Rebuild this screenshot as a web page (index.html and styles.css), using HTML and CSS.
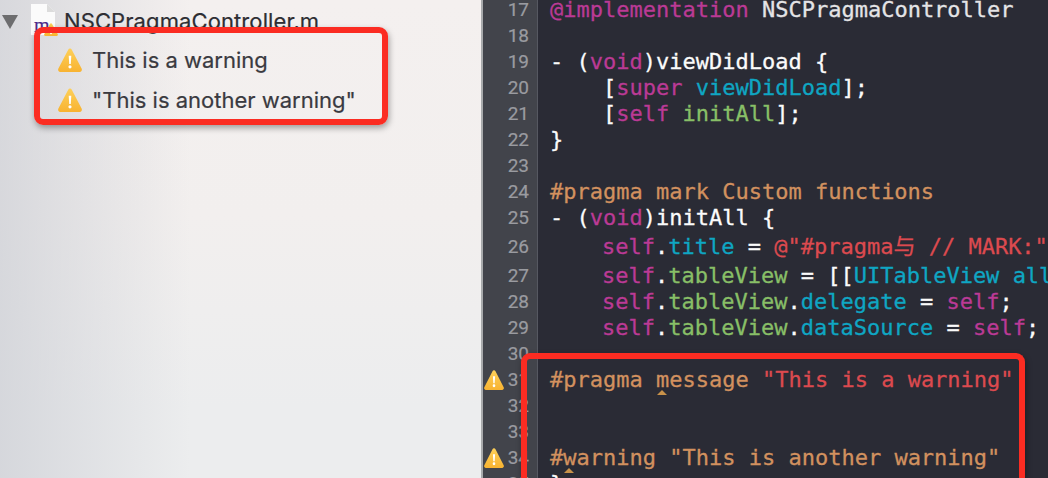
FILE: index.html
```html
<!DOCTYPE html>
<html lang="en">
<head>
<meta charset="utf-8">
<title>NSCPragmaController.m</title>
<link rel="stylesheet" href="styles.css">
</head>
<body>
<svg class="defs" width="0" height="0" aria-hidden="true">
  <defs>
    <linearGradient id="warnfill" x1="0" y1="0" x2="0" y2="1">
      <stop offset="0" stop-color="#fdd05a"/>
      <stop offset="1" stop-color="#f8b331"/>
    </linearGradient>
    <symbol id="warn" viewBox="0 0 24 22" preserveAspectRatio="none">
      <path d="M12 .4c.8 0 1.400.4 1.800 1.100l9.800 17.400c.8 1.400-.2 3-1.800 3H2.200C.6 21.900-.4 20.300.4 18.900L10.200 1.500C10.600.8 11.200.4 12 .4z" fill="url(#warnfill)"/>
      <path d="M10.700 7h2.600l-.5 7.600h-1.600zM12 15.700a1.600 1.600 0 1 1 0 3.200 1.600 1.600 0 0 1 0-3.200z" fill="#fff"/>
    </symbol>
  </defs>
</svg>
<div class="window">
  <aside class="navigator">
    <div class="file-row">
      <svg class="disclosure" viewBox="0 0 16 14"><path d="M0 0h16L8 14z"/></svg>
      <span class="file-icon">
        <svg viewBox="0 0 25 31"><path d="M1 0h16l8 8v23H1z" fill="#fbfbfb"/><path d="M17 0l8 8h-8z" fill="#dcdcdc"/></svg>
        <span class="file-letter">m</span>
        <svg class="file-badge"><use href="#warn"/></svg>
      </span>
      <span class="file-name">NSCPragmaController.m</span>
    </div>
    <div class="issue-row"><svg class="issue-icon"><use href="#warn"/></svg><span>This is a warning</span></div>
    <div class="issue-row"><svg class="issue-icon"><use href="#warn"/></svg><span>"This is another warning"</span></div>
  </aside>
  <main class="editor">
    <div class="line"><span class="num">17</span><code class="src"><i class="kw">@implementation</i> <i class="plain">NSCPragmaController</i></code></div>
    <div class="line"><span class="num">18</span><code class="src"></code></div>
    <div class="line"><span class="num">19</span><code class="src">- (<i class="kw">void</i>)viewDidLoad {</code></div>
    <div class="line"><span class="num">20</span><code class="src">    [<i class="kw">super</i> <i class="api">viewDidLoad</i>];</code></div>
    <div class="line"><span class="num">21</span><code class="src">    [<i class="kw">self</i> <i class="prj">initAll</i>];</code></div>
    <div class="line"><span class="num">22</span><code class="src">}</code></div>
    <div class="line"><span class="num">23</span><code class="src"></code></div>
    <div class="line"><span class="num">24</span><code class="src"><i class="pre">#pragma mark Custom functions</i></code></div>
    <div class="line tall"><span class="num">25</span><code class="src">- (<i class="kw">void</i>)initAll {</code></div>
    <div class="line tall"><span class="num">26</span><code class="src inset">    <i class="kw">self</i>.<i class="api">title</i> = <i class="str">@"#pragma与 // MARK:"</i></code></div>
    <div class="line"><span class="num">27</span><code class="src inset">    <i class="kw">self</i>.<i class="prj">tableView</i> = [[<i class="api">UITableView</i> <i class="api">all</i></code></div>
    <div class="line"><span class="num">28</span><code class="src inset">    <i class="kw">self</i>.<i class="prj">tableView</i>.<i class="api">delegate</i> = <i class="kw">self</i>;</code></div>
    <div class="line"><span class="num">29</span><code class="src inset">    <i class="kw">self</i>.<i class="prj">tableView</i>.<i class="api">dataSource</i> = <i class="kw">self</i>;</code></div>
    <div class="line"><span class="num">30</span><code class="src"></code></div>
    <div class="line"><svg class="gutter-warn"><use href="#warn"/></svg><span class="num">31</span><code class="src"><i class="pre">#pragma <b class="mark">m</b>essage </i><i class="str">"This is a warning"</i></code></div>
    <div class="line"><span class="num">32</span><code class="src"></code></div>
    <div class="line"><span class="num">33</span><code class="src"></code></div>
    <div class="line"><svg class="gutter-warn"><use href="#warn"/></svg><span class="num">34</span><code class="src"><i class="pre">#<b class="mark">w</b>arning "This is another warning"</i></code></div>
    <div class="line"><span class="num">35</span><code class="src">}</code></div>
  </main>
</div>
<div class="callout callout-nav"></div>
<div class="callout callout-code"></div>
</body>
</html>
```
FILE: styles.css
```css
* { box-sizing: border-box; }
html, body { margin: 0; height: 100%; overflow: hidden; }
body { position: relative; background: #2a2b35; }
.defs { position: absolute; }

.window { display: flex; height: 478px; overflow: hidden; }

.navigator {
  flex: 0 0 481px;
  padding-top: 5px;
  background:
    linear-gradient(90deg, rgba(206, 208, 214, .75) 0, rgba(206, 208, 214, 0) 190px),
    linear-gradient(180deg, #f4f0ef 0, #f2efee 45%, #ecedee 85%);
  font-family: "Inter", "Liberation Sans", sans-serif;
  color: #3a3a40;
  -webkit-text-stroke: .2px currentColor;
}
.file-row { display: flex; align-items: center; height: 31px; padding-left: 2px; }
.disclosure { width: 16px; height: 14px; fill: #6d6d6f; margin-top: 2px; }
.file-icon { position: relative; width: 25px; height: 31px; margin-left: 12px; margin-top: -2px; }
.file-icon > svg:first-child { display: block; width: 25px; height: 31px; }
.file-letter {
  position: absolute; left: 4px; top: 11px;
  font: 20px/20px "Liberation Serif", serif; color: #4a2a8a;
}
.file-badge { position: absolute; right: -3px; bottom: -1px; width: 14px; height: 13px; }
.file-name { margin-left: 9px; font-size: 22px; color: #2e2e33; letter-spacing: .1px; }
.issue-row {
  display: flex; align-items: center; gap: 11px;
  height: 40px; padding-left: 58px;
  font-size: 22px;
}
.issue-row:nth-child(2) { margin-top: 4px; }
.issue-icon { width: 24px; height: 24px; flex: none; }
.issue-row span { margin-left: -1px; }

.editor {
  flex: 1; min-width: 0;
  background: linear-gradient(90deg, #a8aaac 0, #a8aaac 2px, #42444b 2px, #42444b 56px, #565861 56px, #565861 57px, #2a2b35 57px);
  overflow: hidden;
}
.line { position: relative; display: flex; height: 26px; white-space: pre; }
.line:first-child { height: 23px; }
.line.tall { height: 29px; }
.num {
  flex: 0 0 49px; padding-right: 1px;
  text-align: right;
  font: 19px/26px "Roboto", "Liberation Sans", sans-serif;
  color: #9a9ba0;
  -webkit-text-stroke: .2px currentColor;
}
.src {
  margin-left: 20px;
  font: 22px/26px "DejaVu Sans Mono", "Noto Sans CJK SC", monospace;
  color: #fbfbfb;
  -webkit-text-stroke: .3px currentColor;
}
.line:first-child .num, .line:first-child .src { line-height: 20px; }
.src.inset { margin-left: 19px; }
.src i { font-style: normal; }
.kw { color: #bb3a95; }
.plain { color: #e4e4e6; }
.api { color: #0fa6c3; }
.prj { color: #88bf67; }
.pre { color: #d2915f; }
.str { color: #dc4a4f; }
.mark { position: relative; font-weight: normal; }
.mark::after {
  content: "";
  position: absolute; left: 1px; top: 23px;
  border: 5px solid transparent; border-top: 0;
  border-bottom: 5px solid #c8924a;
}
.gutter-warn { position: absolute; left: 3px; top: 3px; width: 20px; height: 20px; }

.callout {
  position: absolute;
  border: 6px solid #fb2c22;
  border-radius: 9px;
  box-shadow: 1px 3px 6px rgba(0, 0, 0, .35);
}
.callout-nav { left: 34px; top: 27px; width: 354px; height: 98px; }
.callout-code {
  left: 521px; top: 353px; width: 504px; height: 125px;
  border-bottom: 0;
  border-radius: 9px 9px 0 0;
}
```
